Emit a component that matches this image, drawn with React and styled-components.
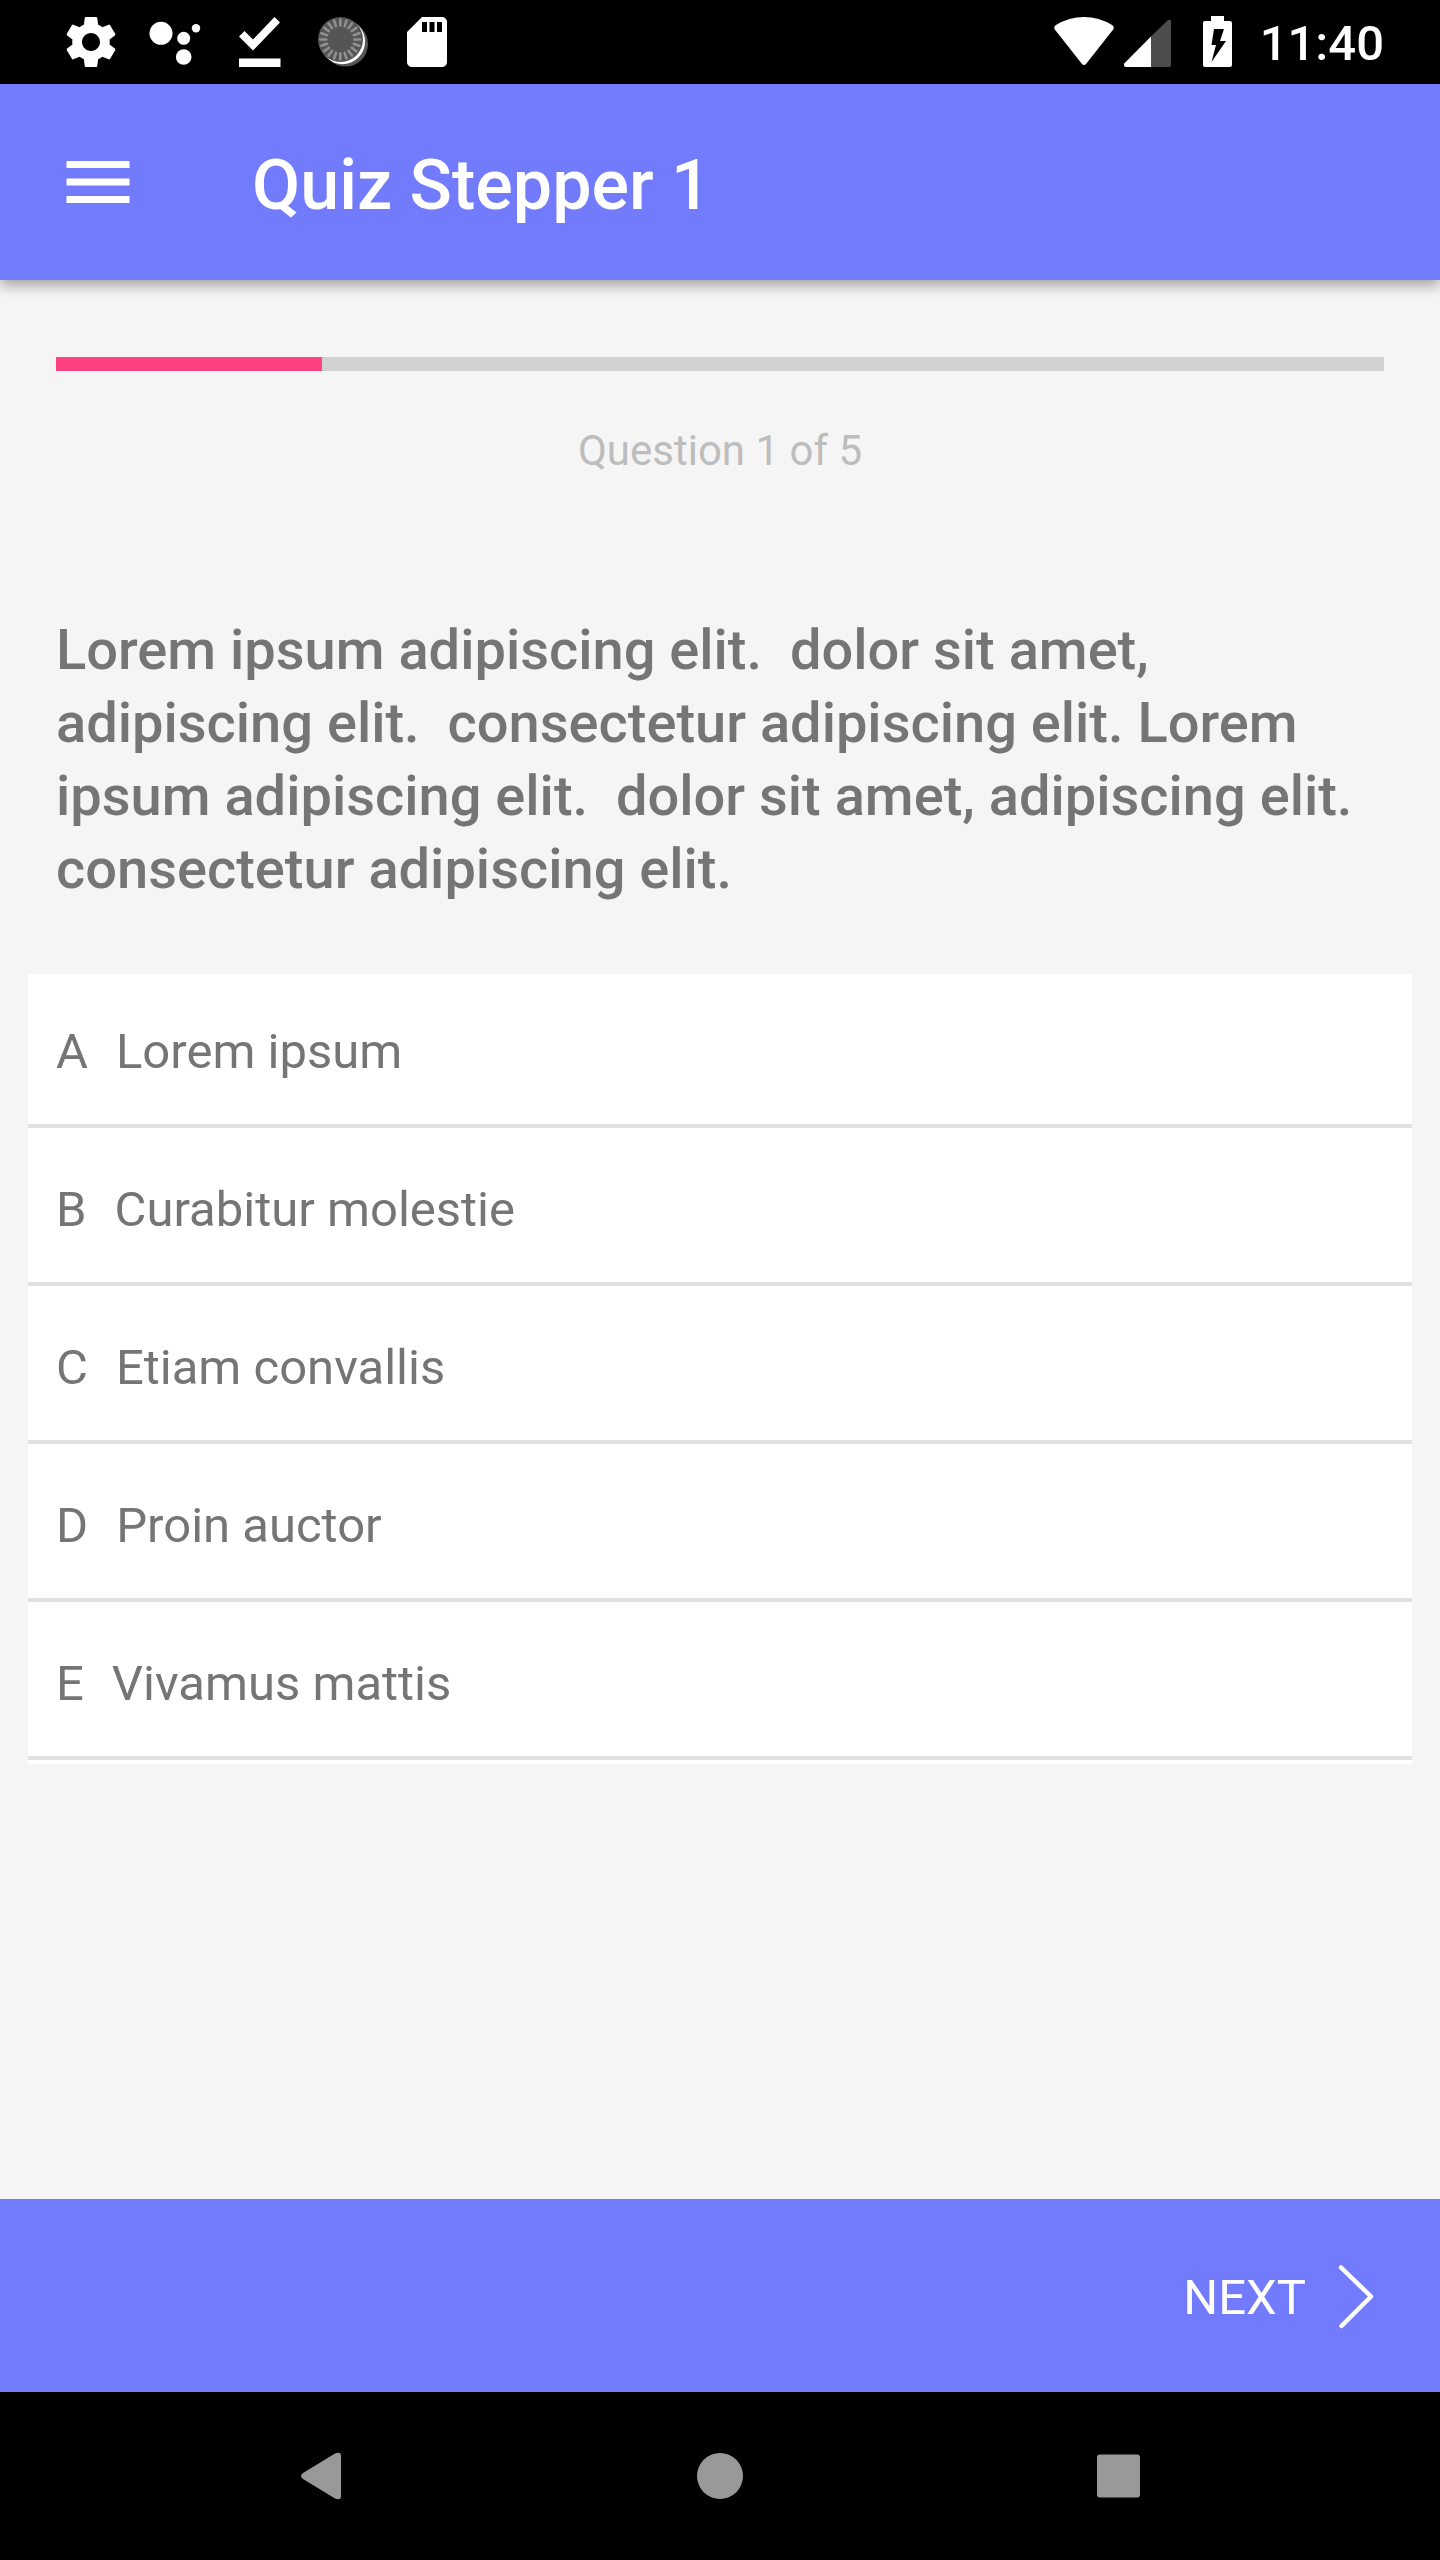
import React, { useState } from "react";
import styled, { createGlobalStyle } from "styled-components";

const GlobalStyle = createGlobalStyle`
  * { box-sizing: border-box; }
  body { margin: 0; background: #f5f5f5; font-family: Roboto, "Liberation Sans", sans-serif; }
  button { border: 0; margin: 0; padding: 0; background: none; color: inherit; font: inherit; cursor: pointer; }
  svg { display: block; flex: none; }
`;

const Screen = styled.div`
  display: flex;
  flex-direction: column;
  min-height: 100vh;
`;

const StatusBar = styled.div`
  display: flex;
  align-items: center;
  justify-content: space-between;
  height: 84px;
  padding: 0 56px 0 61px;
  background: #000;
  color: #fff;
`;

const StatusGroup = styled.div`
  display: flex;
  align-items: center;
  gap: ${(p) => p.$gap}px;
`;

const Clock = styled.time`
  padding: 4px 0 0 14px;
  font-size: 49px;
  line-height: 58px;
  font-weight: 500;
`;

const AppBar = styled.header`
  display: flex;
  align-items: center;
  gap: 112px;
  height: 196px;
  padding: 0 56px;
  background: #727bfb;
  color: #fff;
  box-shadow: 0 6px 12px rgba(0, 0, 0, 0.32);
`;

const Title = styled.h1`
  margin: 0;
  padding-top: 6px;
  font-size: 70px;
  line-height: 82px;
  font-weight: 500;
`;

const Main = styled.main`
  flex: 1;
  padding: 77px 28px 56px;
`;

const Intro = styled.section`
  display: flex;
  flex-direction: column;
  padding: 0 28px;
`;

const Progress = styled.progress`
  appearance: none;
  width: 100%;
  height: 14px;
  border: 0;
  background: #d1d1d1;
  &::-webkit-progress-bar { background: #d1d1d1; }
  &::-webkit-progress-value { background: #ff4081; }
`;

const Counter = styled.p`
  margin: 55px 0 138px;
  text-align: center;
  color: #bdbdbd;
  font-size: 42px;
  line-height: 50px;
`;

const Question = styled.h2`
  margin: 0 0 68px;
  color: #757575;
  font-size: 56px;
  line-height: 73px;
  font-weight: 500;
  white-space: pre-wrap;
`;

const Answers = styled.ul`
  margin: 0;
  padding: 0;
  list-style: none;
  background: #fff;
`;

const Answer = styled.li`
  padding-bottom: 4px;
`;

const AnswerButton = styled.button`
  display: flex;
  gap: 28px;
  width: 100%;
  padding: 49px 28px 43px;
  border-bottom: 4px solid #e0e0e0;
  color: #757575;
  font-size: 49px;
  line-height: 58px;
  text-align: left;
`;

const Footer = styled.footer`
  display: flex;
  justify-content: flex-end;
  height: 193px;
  padding: 4px 56px 0;
  background: #727bfb;
  color: #fff;
`;

const NextButton = styled.button`
  display: flex;
  align-items: center;
  gap: 22px;
  font-size: 49px;
  line-height: 58px;
`;

const NavBar = styled.nav`
  display: grid;
  grid-template-columns: repeat(3, 1fr);
  height: 168px;
  padding: 0 120px;
  background: #000;
`;

const NavButton = styled.button`
  display: flex;
  align-items: center;
  justify-content: center;
`;

const Icon = ({ width = 60, height = 60, box, children, fill = "#fff" }) => (
  <svg width={width} height={height} viewBox={box || `0 0 ${width} ${height}`} fill={fill} aria-hidden="true">
    {children}
  </svg>
);

const GearIcon = () => (
  <Icon box="0 0 24 24">
    <path d="M19.43 12.98c.04-.32.07-.64.07-.98s-.03-.66-.07-.98l2.11-1.65c.19-.15.24-.42.12-.64l-2-3.46c-.12-.22-.39-.3-.61-.22l-2.49 1c-.52-.4-1.08-.73-1.69-.98l-.38-2.65C14.46 2.18 14.25 2 14 2h-4c-.25 0-.46.18-.49.42l-.38 2.65c-.61.25-1.17.59-1.69.98l-2.49-1c-.23-.09-.49 0-.61.22l-2 3.46c-.13.22-.07.49.12.64l2.11 1.65c-.04.32-.07.65-.07.98s.03.66.07.98l-2.11 1.65c-.19.15-.24.42-.12.64l2 3.46c.12.22.39.3.61.22l2.49-1c.52.4 1.08.73 1.69.98l.38 2.65c.03.24.24.42.49.42h4c.25 0 .46-.18.49-.42l.38-2.65c.61-.25 1.17-.59 1.69-.98l2.49 1c.23.09.49 0 .61-.22l2-3.46c.12-.22.07-.49-.12-.64l-2.11-1.65zM12 15.6c-1.98 0-3.6-1.62-3.6-3.6s1.62-3.6 3.6-3.6 3.6 1.62 3.6 3.6-1.62 3.6-3.6 3.6z" />
  </Icon>
);

const AssistantIcon = () => (
  <Icon>
    <circle cx="16" cy="21.3" r="11.5" />
    <circle cx="38.7" cy="26.3" r="6.5" />
    <circle cx="51" cy="16.3" r="4.2" />
    <circle cx="38.7" cy="45" r="7.8" />
  </Icon>
);

const DoneIcon = () => (
  <Icon>
    <path d="M10 24.5 15.5 19 24 27.5 45.5 5 51 10.5 24 38.5zM10 46.5h41.5V55H10z" />
  </Icon>
);

const ticks = Array.from({ length: 20 }, (_, i) => i * 18);

const SyncIcon = () => (
  <Icon>
    <circle cx="32.4" cy="32" r="22.6" fill="#555" />
    <circle cx="29.5" cy="29.6" r="22.6" />
    <circle cx="27.5" cy="27.5" r="22.5" fill="#555" />
    {ticks.map((angle) => (
      <path key={angle} d="M27.3 7.6v5.8" stroke="#909090" strokeWidth="2.6" strokeLinecap="round" transform={`rotate(${angle} 27.3 27.5)`} />
    ))}
  </Icon>
);

const SdCardIcon = () => (
  <Icon box="0 0 24 24">
    <path d="M18 2h-8L4 8v12c0 1.1.9 2 2 2h12c1.1 0 2-.9 2-2V4c0-1.1-.9-2-2-2zm-6 6h-2V4h2v4zm3 0h-2V4h2v4zm3 0h-2V4h2v4z" />
  </Icon>
);

const WifiIcon = () => (
  <Icon width={64}>
    <path d="M1.2 18Q-1 15 2 13Q15 5 30 5T58 13Q61 15 58.8 18L32 52Q30 54 28 52z" />
  </Icon>
);

const SignalIcon = () => (
  <Icon width={64}>
    <path d="M33 24.5V55H8.500Q5 55 6.200 51.500z" />
    <path d="M33 24.500 49.500 8.500Q53 6.500 53 10V53Q53 55 51 55H33z" fill="#4d4d4d" />
  </Icon>
);

const BatteryIcon = () => (
  <Icon width={64}>
    <path fillRule="evenodd" d="M29 4H42V9H48Q50 9 50 11V53Q50 55 48 55H23Q21 55 21 53V11Q21 9 23 9H29zM32 17 29.500 33H34L29.500 50 44 29H38L42 17z" />
  </Icon>
);

const MenuIcon = () => (
  <Icon width={84} height={84} box="0 0 24 24">
    <path d="M3 18h18v-2H3v2zm0-5h18v-2H3v2zm0-7v2h18V6H3z" />
  </Icon>
);

const ChevronIcon = () => (
  <Icon width={56} height={70} fill="none">
    <path d="M13 4.500 43 33.500 13.500 63" stroke="#fff" strokeWidth="4.500" strokeLinecap="round" strokeLinejoin="round" />
  </Icon>
);

const answers = [
  ["A", "Lorem ipsum"],
  ["B", "Curabitur molestie"],
  ["C", "Etiam convallis"],
  ["D", "Proin auctor"],
  ["E", "Vivamus mattis"],
];

const question =
  "Lorem ipsum adipiscing elit.  dolor sit amet, adipiscing elit.  consectetur adipiscing elit. Lorem ipsum adipiscing elit.  dolor sit amet, adipiscing elit.  consectetur adipiscing elit.";

export default function App() {
  const [selected, setSelected] = useState(null);
  return (
    <Screen>
      <GlobalStyle />
      <StatusBar>
        <StatusGroup $gap={24}>
          <GearIcon />
          <AssistantIcon />
          <DoneIcon />
          <SyncIcon />
          <SdCardIcon />
        </StatusGroup>
        <StatusGroup $gap={0}>
          <WifiIcon />
          <SignalIcon />
          <BatteryIcon />
          <Clock>11:40</Clock>
        </StatusGroup>
      </StatusBar>
      <AppBar>
        <button type="button" aria-label="Menu">
          <MenuIcon />
        </button>
        <Title>Quiz Stepper 1</Title>
      </AppBar>
      <Main>
        <Intro>
          <Progress value={1} max={5} aria-label="Quiz progress" />
          <Counter>Question 1 of 5</Counter>
          <Question>{question}</Question>
        </Intro>
        <Answers>
          {answers.map(([letter, text]) => (
            <Answer key={letter}>
              <AnswerButton type="button" aria-pressed={selected === letter} onClick={() => setSelected(letter)}>
                <span>{letter}</span>
                <span>{text}</span>
              </AnswerButton>
            </Answer>
          ))}
        </Answers>
      </Main>
      <Footer>
        <NextButton type="button">
          NEXT
          <ChevronIcon />
        </NextButton>
      </Footer>
      <NavBar>
        <NavButton type="button" aria-label="Back">
          <Icon width={48} height={48} fill="#999">
            <path d="M39 1.500Q45 -1 45 4V44Q45 49 39 46.500L7 27Q3 24 7 21z" />
          </Icon>
        </NavButton>
        <NavButton type="button" aria-label="Home">
          <Icon width={48} height={48} fill="#999">
            <circle cx="24" cy="24" r="23" />
          </Icon>
        </NavButton>
        <NavButton type="button" aria-label="Recent apps">
          <Icon width={48} height={48} fill="#999">
            <rect x="1" y="2.500" width="43" height="43" rx="3" />
          </Icon>
        </NavButton>
      </NavBar>
    </Screen>
  );
}
